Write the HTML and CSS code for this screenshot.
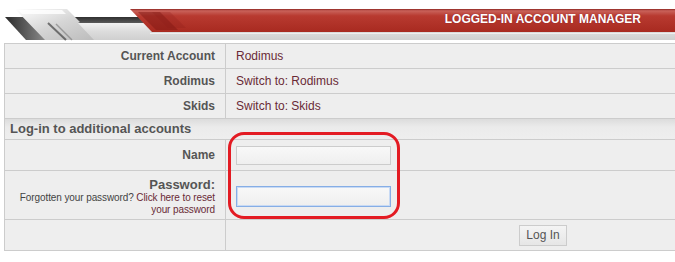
FILE: index.html
```html
<!DOCTYPE html>
<html>
<head>
<meta charset="utf-8">
<link rel="stylesheet" href="styles.css">
</head>
<body>
<div class="header">
  <svg class="header-art" width="675" height="42" viewBox="0 0 675 42">
    <defs>
      <linearGradient id="base" x1="0" y1="0" x2="0" y2="1">
        <stop offset="0" stop-color="#f2f2f2"/>
        <stop offset="0.5" stop-color="#dcdcdc"/>
        <stop offset="1" stop-color="#cfcfcf"/>
      </linearGradient>
      <linearGradient id="red" x1="0" y1="0" x2="0" y2="1">
        <stop offset="0" stop-color="#8f2520"/>
        <stop offset="0.08" stop-color="#c9625a"/>
        <stop offset="0.3" stop-color="#b83a30"/>
        <stop offset="1" stop-color="#a82a20"/>
      </linearGradient>
      <linearGradient id="blk" x1="0" y1="0" x2="1" y2="0">
        <stop offset="0" stop-color="#2a2a2a"/>
        <stop offset="1" stop-color="#9a9a9a"/>
      </linearGradient>
      <linearGradient id="silver" x1="0" y1="0" x2="1" y2="1">
        <stop offset="0" stop-color="#ffffff"/>
        <stop offset="0.5" stop-color="#d6d6d6"/>
        <stop offset="1" stop-color="#bcbcbc"/>
      </linearGradient>
      <linearGradient id="bar" x1="0" y1="0" x2="0" y2="1">
        <stop offset="0" stop-color="#2f2f2f"/>
        <stop offset="1" stop-color="#5a5a5a"/>
      </linearGradient>
    </defs>
    <polygon points="22,23 675,23 675,40 32,40" fill="url(#base)"/>
    <rect x="150" y="33" width="525" height="1" fill="#eeeeee"/>
    <polygon points="72,17 146,17 152,23 78,23" fill="url(#bar)"/>
    <polygon points="5,17 28,17 52,40 26,40" fill="url(#blk)"/>
    <polygon points="15,9 67,9 80,22 78,23 94,40 45,40" fill="url(#silver)"/>
    <polygon points="18,10 62,10 66,14 22,14" fill="#ffffff" opacity="0.8"/>
    <line x1="48" y1="23" x2="66" y2="40" stroke="#444" stroke-width="2" opacity="0.7"/>
    <line x1="56" y1="24" x2="72" y2="40" stroke="#777" stroke-width="1.5" opacity="0.6"/>
    <polygon points="130,9 675,9 675,32 152,32" fill="url(#red)"/>
    <polygon points="138,12 160,12 178,30 156,30" fill="#7c1712" opacity="0.45"/>
    <polygon points="152,12 170,12 186,28 168,28" fill="#8a1d18" opacity="0.25"/>
  </svg>
  <div class="title">LOGGED-IN ACCOUNT MANAGER</div>
</div>

<div class="panel">
  <div class="row r24">
    <div class="label">Current Account</div>
    <div class="value">Rodimus</div>
  </div>
  <div class="row r24">
    <div class="label">Rodimus</div>
    <div class="value">Switch to: Rodimus</div>
  </div>
  <div class="row r24">
    <div class="label">Skids</div>
    <div class="value">Switch to: Skids</div>
  </div>
  <div class="section">Log-in to additional accounts</div>
  <div class="row r30">
    <div class="label">Name</div>
    <div class="value"><input class="field" type="text"></div>
  </div>
  <div class="row r48">
    <div class="label pw">
      <div>Password:</div>
      <div class="hint">Forgotten your password? <span class="link">Click here to reset your password</span></div>
    </div>
    <div class="value"><input class="field focus" type="password"></div>
  </div>
  <div class="row r30 last">
    <div class="label"></div>
    <div class="value btncell"><button class="btn">Log In</button></div>
  </div>
  <div class="annot"></div>
</div>
</body>
</html>
```

FILE: styles.css
```css
html, body {
  margin: 0;
  padding: 0;
  background: #ffffff;
  font-family: "Liberation Sans", Arial, sans-serif;
  font-size: 12px;
}

.header {
  position: relative;
  height: 43px;
  width: 675px;
  overflow: hidden;
}

.header-art {
  position: absolute;
  left: 0;
  top: 0;
  display: block;
}

.title {
  position: relative;
  text-align: right;
  padding-right: 34px;
  padding-top: 12px;
  color: #ffffff;
  font-weight: bold;
  font-size: 12px;
  line-height: 14px;
  text-shadow: 0 0 1px rgba(90, 0, 40, 0.6);
}

.panel {
  position: relative;
  margin-left: 4px;
  border-left: 1px solid #cccccc;
  border-top: 1px solid #cccccc;
  background: #eeeeee;
  width: 700px;
}

.row {
  display: grid;
  grid-template-columns: 221px 1fr;
  border-bottom: 1px solid #cccccc;
}

.r24 { height: 24px; }
.r30 { height: 30px; }
.r48 { height: 48px; }

.label {
  border-right: 1px solid #cccccc;
  text-align: right;
  padding-right: 10px;
  font-weight: bold;
  color: #555555;
  display: flex;
  align-items: center;
  justify-content: flex-end;
}

.value {
  padding-left: 10px;
  color: #6a2a36;
  display: flex;
  align-items: center;
}

.label.pw {
  flex-direction: column;
  align-items: flex-end;
  justify-content: flex-start;
  padding-top: 7px;
  line-height: 13px;
  font-size: 13px;
}

.hint {
  font-weight: normal;
  font-size: 10px;
  line-height: 12px;
  letter-spacing: -0.1px;
  color: #444444;
  width: 200px;
  margin-top: 1px;
}

.link {
  color: #6a2a36;
}

.section {
  height: 20px;
  line-height: 20px;
  border-bottom: 1px solid #cccccc;
  padding-left: 5px;
  font-weight: bold;
  color: #555555;
  font-size: 13px;
  background: linear-gradient(#dcdcdc, #ebebeb 40%, #eeeeee);
}

.field {
  box-sizing: border-box;
  width: 155px;
  height: 19px;
  margin: 0;
  padding: 1px 3px;
  border: 1px solid #cccccc;
  background: linear-gradient(#f8f8f8, #efefef);
  outline: none;
}

.field.focus {
  height: 21px;
  margin-top: 3px;
  border: 1px solid #86aee6;
  box-shadow: inset 0 0 0 1px #c8daf4;
}

.btncell {
  padding-left: 293px;
}

.btn {
  box-sizing: border-box;
  width: 48px;
  height: 21px;
  margin: 0;
  padding: 0;
  border: 1px solid #cccccc;
  background: linear-gradient(#f4f4f4, #e6e6e6);
  font-family: "Liberation Sans", Arial, sans-serif;
  font-size: 12px;
  color: #555555;
}

.annot {
  position: absolute;
  left: 223px;
  top: 88px;
  width: 166px;
  height: 81px;
  border: 3px solid #e31b23;
  border-radius: 16px;
  pointer-events: none;
}
```
